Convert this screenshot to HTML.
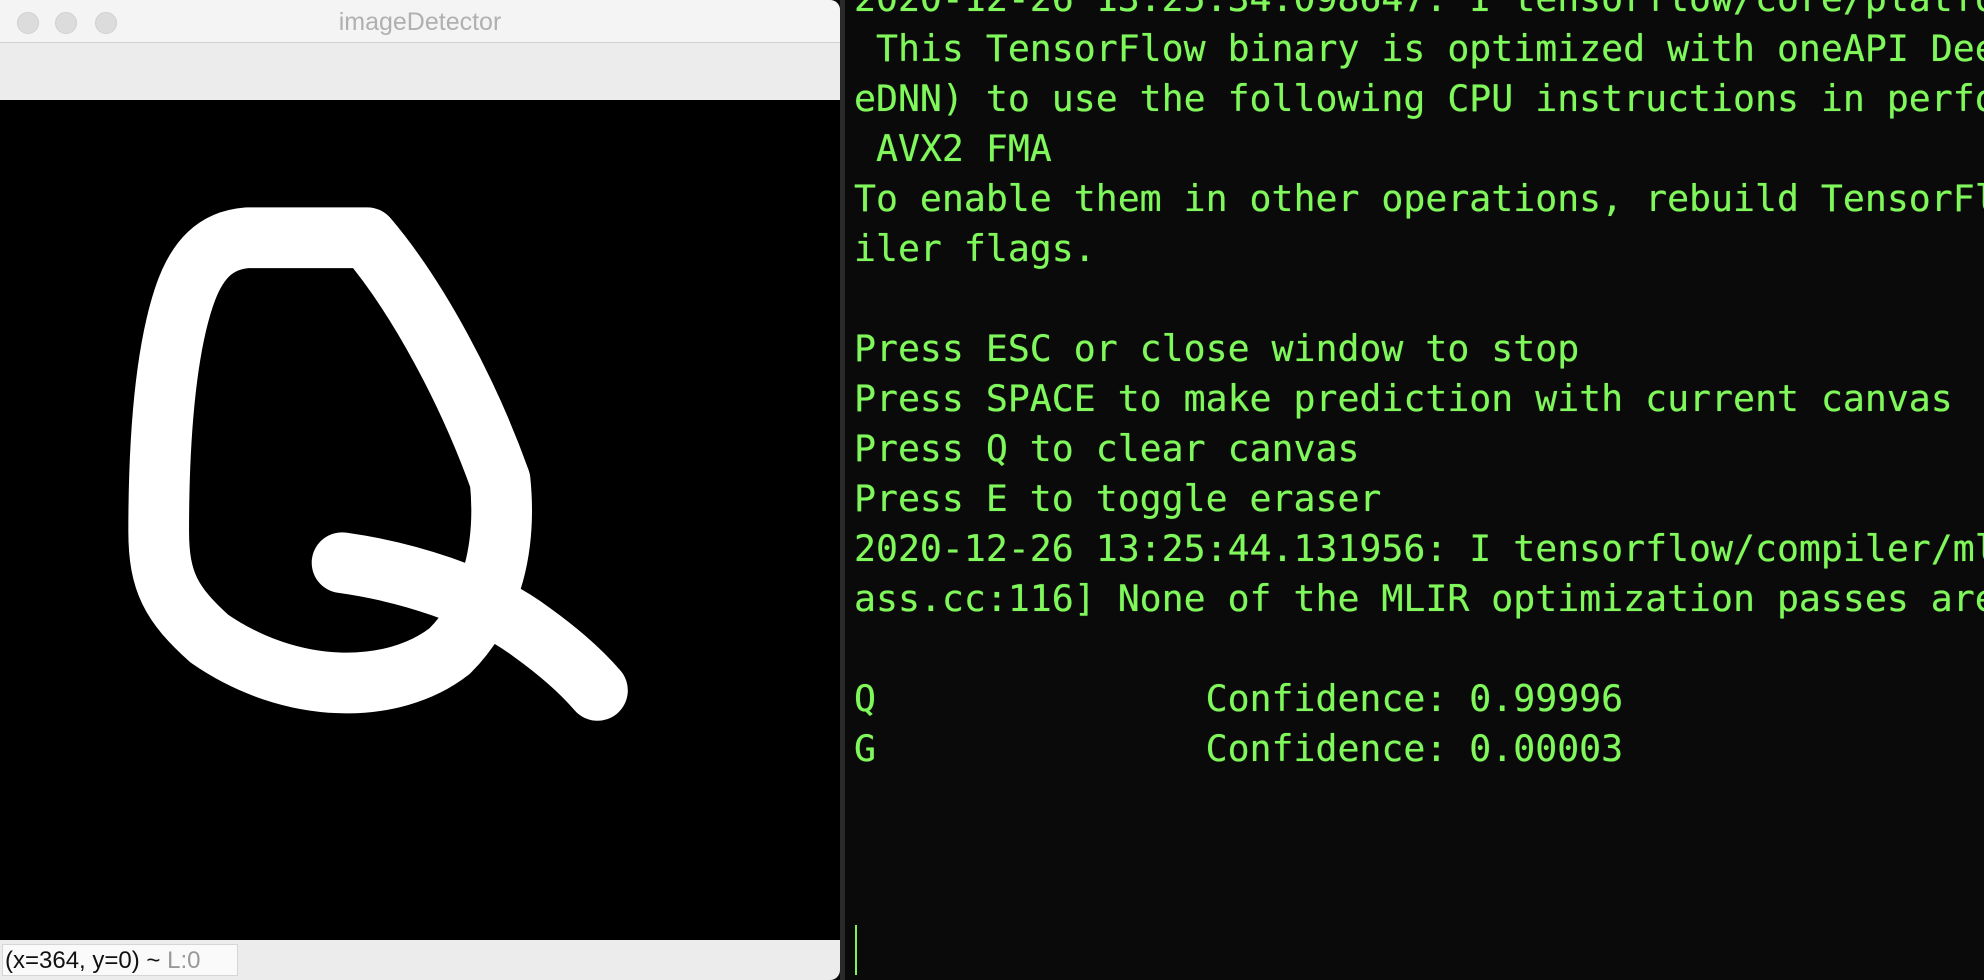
<!DOCTYPE html>
<html><head><meta charset="utf-8"><style>
body{margin:0;width:1984px;height:980px;overflow:hidden;background:#0a0a0a;position:relative;font-family:"Liberation Sans",sans-serif}
#win{position:absolute;left:0;top:0;width:840px;height:980px;background:#ececec;border-radius:0 10px 10px 0;overflow:hidden}
#title{position:absolute;left:0;top:0;width:840px;height:42px;background:#f4f4f4;border-bottom:1px solid #d0d0d0;text-align:center;line-height:44px;color:#b0b0b0;font-size:25px}
.dot{position:absolute;top:12px;width:20px;height:20px;border-radius:50%;background:#dcdcdc;border:1px solid #d0d0d0}
#canvas{position:absolute;left:0;top:100px;width:840px;height:840px;background:#000}
#status{position:absolute;left:2px;top:944px;width:236px;height:32px;background:#fafafa;border:1px solid #d6d6d6;font-size:24px;line-height:32px;color:#111;padding-left:2px;box-sizing:border-box}
#term{position:absolute;left:854px;top:-26px;font-family:"DejaVu Sans Mono",monospace;font-size:36.5px;line-height:50px;color:#80f85c;white-space:pre;text-shadow:0 0 0.6px #80f85c}
#cursor{position:absolute;left:855px;top:925px;width:2px;height:50px;background:#7df05a}
#sep{position:absolute;left:840px;top:0;width:5px;height:980px;background:#2a2a2a}
</style></head><body>
<div id="win">
<div id="title">imageDetector</div>
<div class="dot" style="left:17px"></div><div class="dot" style="left:55px"></div><div class="dot" style="left:95px"></div>
<div id="canvas"></div>
<div id="status">(x=364, y=0) ~ <span style="color:#999">L:0</span></div>
</div>
<div id="sep"></div>
<svg style="position:absolute;left:0;top:0" width="1984" height="980" viewBox="0 0 1568 775">
<path d="M195 188 L290 188 C330 235 370 310 395 380 C400 430 390 480 355 515 C310 550 230 550 165 505 C135 478 125 460 125 420 C125 350 130 280 145 235 C155 205 170 190 195 188 Z" fill="none" stroke="#fff" stroke-width="48" stroke-linejoin="round"/>
<path d="M270 445 C320 452 380 470 420 500 C445 518 460 532 472 546" fill="none" stroke="#fff" stroke-width="48" stroke-linecap="round"/>
</svg>
<div id="term">2020-12-26 13:25:34.098647: I tensorflow/core/platform
 This TensorFlow binary is optimized with oneAPI Deep
eDNN) to use the following CPU instructions in perfor
 AVX2 FMA
To enable them in other operations, rebuild TensorFlo
iler flags.

Press ESC or close window to stop
Press SPACE to make prediction with current canvas
Press Q to clear canvas
Press E to toggle eraser
2020-12-26 13:25:44.131956: I tensorflow/compiler/mli
ass.cc:116] None of the MLIR optimization passes are

Q               Confidence: 0.99996
G               Confidence: 0.00003</div>
<div id="cursor"></div>
</body></html>
